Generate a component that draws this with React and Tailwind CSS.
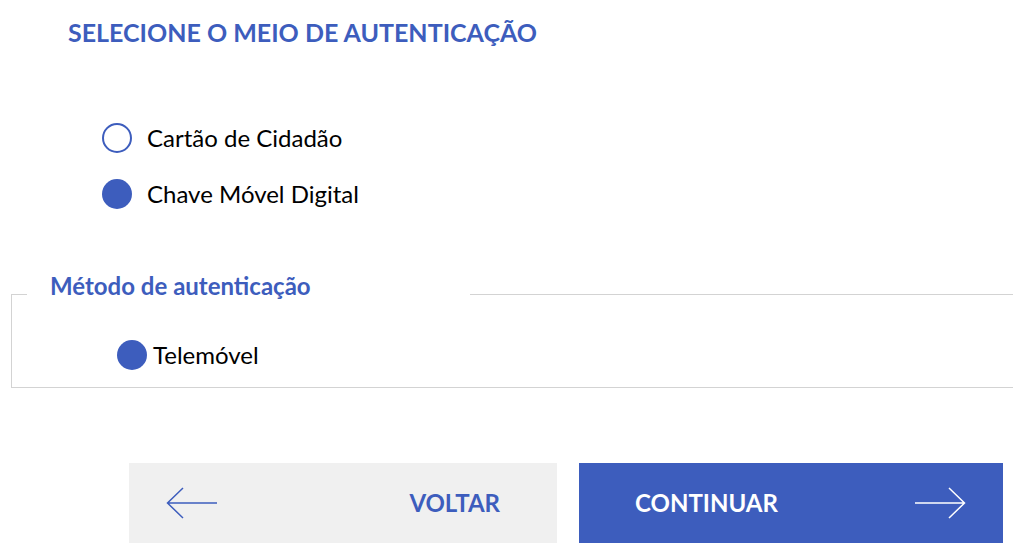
import React, { useState } from "react";

const BLUE = "#3d5dbd";

const Radio = ({ checked }) => (
  <span
    className={
      checked
        ? "block w-[30px] h-[30px] rounded-full bg-[#3d5dbd] shrink-0"
        : "block w-[30px] h-[30px] rounded-full border-2 border-[#3d5dbd] bg-white shrink-0"
    }
  />
);

const ArrowLeft = ({ color }) => (
  <svg width="52" height="32" viewBox="0 0 52 32" fill="none">
    <path d="M51 16H1.5M17 1L1.5 16L17 31" stroke={color} strokeWidth="1.5" />
  </svg>
);

const ArrowRight = ({ color }) => (
  <svg width="52" height="32" viewBox="0 0 52 32" fill="none">
    <path d="M1 16H50.5M35 1L50.5 16L35 31" stroke={color} strokeWidth="1.5" />
  </svg>
);

const App = () => {
  const [meio, setMeio] = useState("cmd");

  return (
    <div className="w-[1013px] h-[547px] overflow-hidden bg-white font-['Lato','Liberation_Sans',sans-serif]">
      {/* Title */}
      <h1 className="pl-[68px] pt-[17px] text-[25px] leading-[30px] font-bold text-[#3d5dbd]">
        SELECIONE O MEIO DE AUTENTICAÇÃO
      </h1>

      {/* Options */}
      <div className="mt-[76px] pl-[102px] flex flex-col gap-[26px]">
        <label className="flex items-center gap-[15px] h-[30px] cursor-pointer" onClick={() => setMeio("cc")}>
          <Radio checked={meio === "cc"} />
          <span className="text-[24px] text-black">Cartão de Cidadão</span>
        </label>
        <label className="flex items-center gap-[15px] h-[30px] cursor-pointer" onClick={() => setMeio("cmd")}>
          <Radio checked={meio === "cmd"} />
          <span className="text-[24px] text-black">Chave Móvel Digital</span>
        </label>
      </div>

      {/* Method */}
      <fieldset className="mt-[63px] ml-[11px] border border-r-0 border-[#d3d3d3] pl-[15px] pt-[24px] pb-[17px]">
        <legend className="w-[443px] pl-[23px] pb-[16px] text-[24px] leading-[28px] font-bold text-[#3d5dbd]">
          Método de autenticação
        </legend>
        <div className="ml-[90px] flex items-center gap-[6px] h-[30px]">
          <Radio checked />
          <span className="text-[24px] text-black">Telemóvel</span>
        </div>
      </fieldset>

      {/* Buttons */}
      <div className="mt-[75px] pl-[129px] flex gap-[22px]">
        <button className="w-[428px] h-[80px] bg-[#f0f0f0] flex items-center justify-between pl-[37px] pr-[57px]">
          <ArrowLeft color={BLUE} />
          <span className="text-[24px] font-bold text-[#3d5dbd]">VOLTAR</span>
        </button>
        <button className="w-[424px] h-[80px] bg-[#3d5dbd] flex items-center justify-between pl-[56px] pr-[37px]">
          <span className="text-[24px] font-bold text-white">CONTINUAR</span>
          <ArrowRight color="#ffffff" />
        </button>
      </div>
    </div>
  );
};

export default App;
